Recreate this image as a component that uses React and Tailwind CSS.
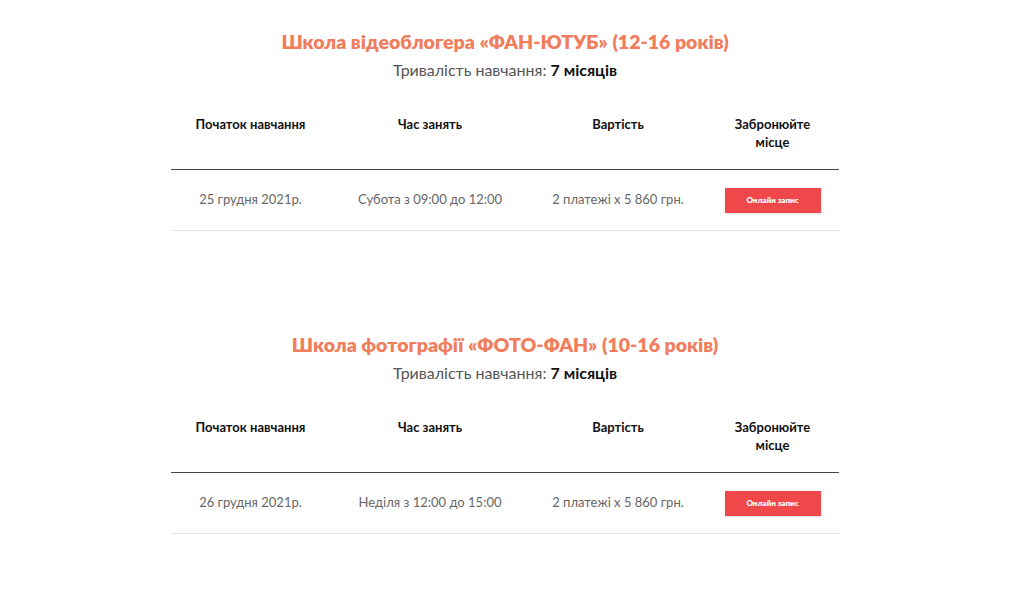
import React from 'react';

const courses = [
  {
    title: 'Школа відеоблогера «ФАН-ЮТУБ» (12-16 років)',
    duration: '7 місяців',
    start: '25 грудня 2021р.',
    time: 'Субота з 09:00 до 12:00',
    price: '2 платежі х 5 860 грн.',
  },
  {
    title: 'Школа фотографії «ФОТО-ФАН» (10-16 років)',
    duration: '7 місяців',
    start: '26 грудня 2021р.',
    time: 'Неділя з 12:00 до 15:00',
    price: '2 платежі х 5 860 грн.',
  },
];

const font = { fontFamily: 'Lato, "Noto Sans", sans-serif' };

function Course({ course }) {
  return (
    <section className="w-[668px]">
      <h2 className="text-center text-[19.5px] leading-[28px] font-extrabold text-[#f07d5c]">{course.title}</h2>
      <p className="mt-[4px] text-center text-[16px] leading-[20px] text-[#555]">
        Тривалість навчання: <b className="font-bold text-[#111]">{course.duration}</b>
      </p>

      <div className="mt-[35px] grid grid-cols-[159px_200px_176px_133px] border-b border-[#444] pb-[18px] text-[13px] leading-[18px] font-bold text-[#111]">
        <div className="text-center">Початок навчання</div>
        <div className="text-center">Час занять</div>
        <div className="text-center">Вартість</div>
        <div className="text-center px-6">Забронюйте місце</div>
      </div>

      <div className="grid grid-cols-[159px_200px_176px_133px] items-center h-[61px] border-b border-[#e4e4e4] text-[13px] text-[#666]">
        <div className="text-center">{course.start}</div>
        <div className="text-center">{course.time}</div>
        <div className="text-center">{course.price}</div>
        <div className="flex justify-center">
          <button className="w-[96px] h-[25px] bg-[#f0474b] text-white text-[8px] font-extrabold shadow-sm">
            Онлайн запис
          </button>
        </div>
      </div>
    </section>
  );
}

export default function App() {
  return (
    <div className="w-[1024px] h-[600px] bg-white pl-[171px] pt-[28px]" style={font}>
      <div className="flex flex-col gap-[100px]">
        {courses.map((c, i) => (
          <Course key={i} course={c} />
        ))}
      </div>
    </div>
  );
}
